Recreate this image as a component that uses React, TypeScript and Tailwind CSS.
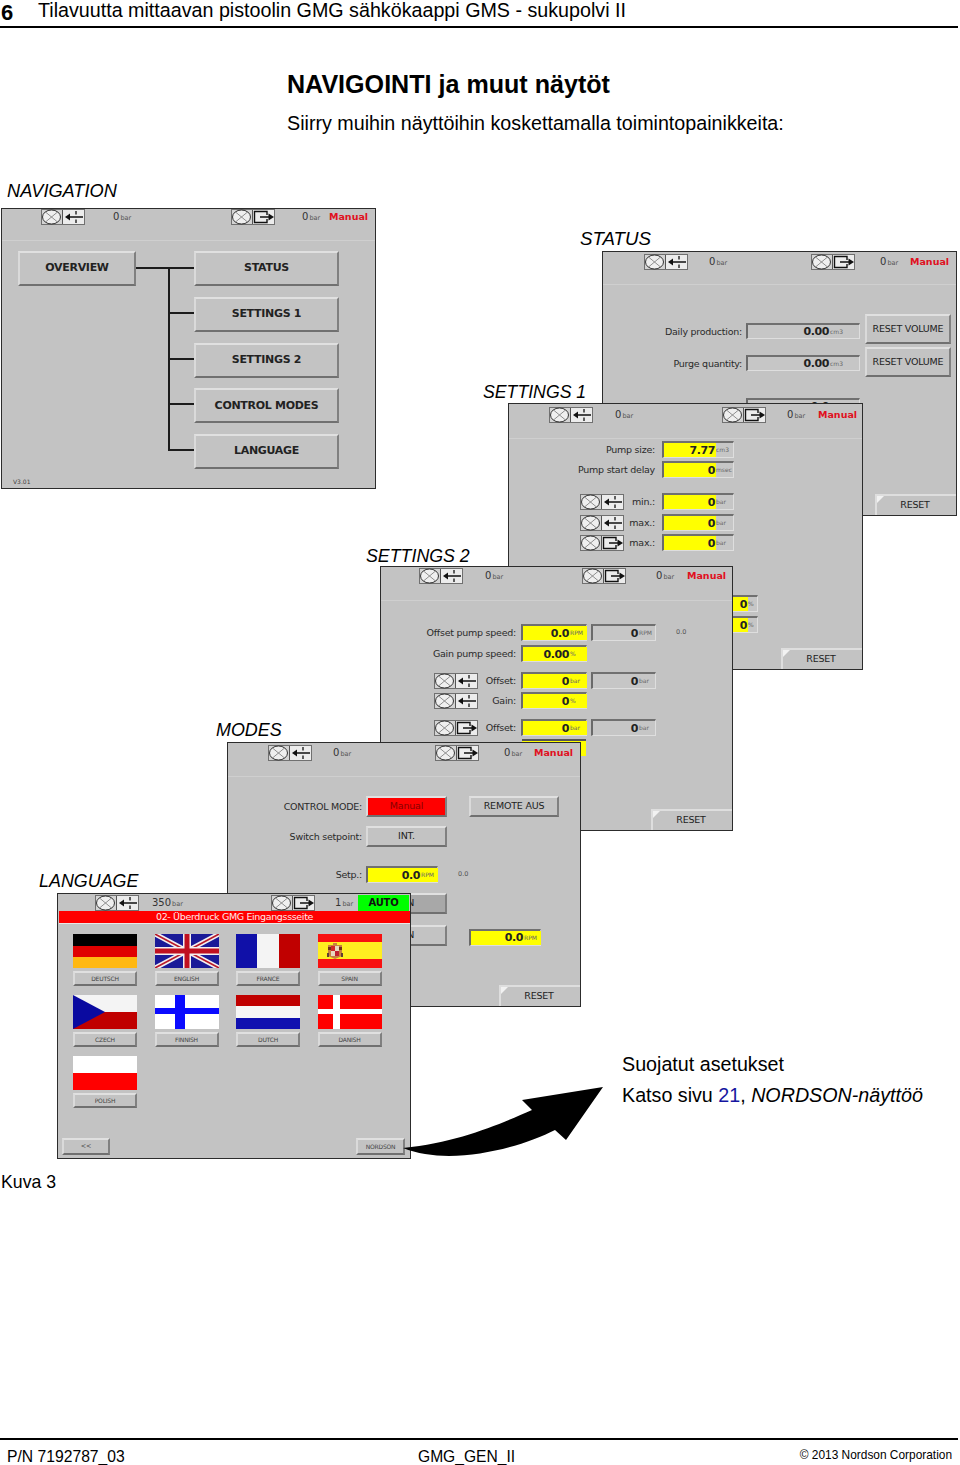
import React from "react";

const HMI = "font-['DejaVu_Sans','Liberation_Sans',sans-serif]";

function Pump({ dir, className = "" }: { dir: "in" | "out"; className?: string }) {
  return (
    <svg width="44" height="16" viewBox="0 0 44 16" className={"shrink-0 " + className}>
      <rect x="0.5" y="0.5" width="43" height="15" fill="#d4d4d4" stroke="#707070" />
      <ellipse cx="10.5" cy="8" rx="9" ry="7" fill="#efefef" stroke="#333" strokeWidth="1" />
      <path d="M4.5 3 L16.5 13 M16.5 3 L4.5 13" stroke="#777" strokeWidth="0.8" />
      <path d="M21.5 1 V15" stroke="#555" strokeWidth="1" />
      <rect x="22" y="1" width="21" height="14" fill="#ececec" />
      {dir === "in" ? (
        <g>
          <path d="M42 8 H27" stroke="#111" strokeWidth="1.5" />
          <path d="M24 8 L29 4.5 V11.5 Z" fill="#111" />
          <path d="M35 2 V5.5 M35 10.5 V14" stroke="#222" strokeWidth="1.4" />
        </g>
      ) : (
        <g>
          <path d="M36 6 V2.5 H23.5 V13.5 H36 V10" stroke="#111" strokeWidth="1.4" fill="none" />
          <path d="M29 8 H38" stroke="#111" strokeWidth="1.5" />
          <path d="M43 8 L37.5 4.5 V11.5 Z" fill="#111" />
        </g>
      )}
    </svg>
  );
}

function Read({ v = "0", u = "bar", className = "" }: { v?: string; u?: string; className?: string }) {
  return (
    <span className={"shrink-0 text-[10px] leading-none text-[#333] whitespace-nowrap " + className}>
      {v}
      <span className="ml-px text-[6.5px] text-[#555]">{u}</span>
    </span>
  );
}

function Manual({ className = "" }: { className?: string }) {
  return <span className={"text-[9.5px] leading-none font-bold text-[#e01020] " + className}>Manual</span>;
}

function Btn({ children, className = "" }: { children?: React.ReactNode; className?: string }) {
  return (
    <div
      className={
        "flex items-center justify-center shrink-0 border-2 border-t-[#e0e0e0] border-l-[#dadada] border-b-[#707070] border-r-[#808080] text-[#222] whitespace-nowrap tracking-[-0.2px] " +
        className
      }
    >
      {children}
    </div>
  );
}

function Reset() {
  return (
    <div className="relative mt-auto self-end shrink-0 w-[81px] h-[21px] flex items-center justify-center pr-[3px] border-t-2 border-l-2 border-t-[#dedede] border-l-[#dedede] text-[9.5px] tracking-[-0.2px] text-[#222]">
      <span className="absolute left-0 top-0 w-0 h-0 border-t-[7px] border-r-[7px] border-t-[#f2f2f2] border-r-transparent" />
      RESET
    </div>
  );
}

function Field({
  v,
  u,
  className = "",
  fill = "",
  uw = "w-[16px]",
}: {
  v: string;
  u: string;
  className?: string;
  fill?: string;
  uw?: string;
}) {
  return (
    <div
      className={
        "relative shrink-0 border-t-2 border-l-2 border-r border-b border-t-[#707070] border-l-[#6a6a6a] border-r-[#dedede] border-b-[#dedede] bg-[#c6c6c6] " +
        className
      }
    >
      {fill && <div className={"absolute left-0 top-0 bottom-0 bg-[#ffff00] " + fill} />}
      <div className="relative h-full flex items-center justify-end">
        <b className="text-[11px] tracking-[-0.4px] leading-none text-[#222]">{v}</b>
        <span className={"ml-px text-[6px] leading-none text-[#666] " + uw}>{u}</span>
      </div>
    </div>
  );
}

function Lbl({ children, className = "" }: { children: React.ReactNode; className?: string }) {
  return (
    <div className={"flex items-center justify-end pt-px text-[9.5px] tracking-[-0.25px] leading-none text-[#2a2a2a] whitespace-nowrap shrink-0 " + className}>
      {children}
    </div>
  );
}

function Win({ children, className = "" }: { children: React.ReactNode; className?: string }) {
  return (
    <section className={"absolute flex flex-col overflow-hidden border border-[#2c2c2c] bg-[#c3c3c3] " + HMI + " " + className}>
      {children}
    </section>
  );
}

function FlagCell({ name, children }: { name: string; children: React.ReactNode }) {
  return (
    <div className="flex flex-col gap-[3px]">
      <svg width="64" height="34" viewBox="0 0 64 34" className="block">
        {children}
      </svg>
      <Btn className="w-[64px] h-[15px] text-[6px] text-[#444]">{name}</Btn>
    </div>
  );
}

export default function App() {
  return (
    <div className="relative w-[960px] h-[1465px] flex flex-col bg-white text-black font-['Liberation_Sans',Arial,sans-serif]">
      <header className="h-[28px] w-[958px] flex items-center border-b-2 border-black">
        <span className="w-[38px] pl-[1px] text-[22px] font-bold leading-none">6</span>
        <span className="text-[19.7px] leading-none -mt-[5px]">Tilavuutta mittaavan pistoolin GMG sähkökaappi GMS - sukupolvi II</span>
      </header>

      <div className="h-[142px] pl-[287px] pt-[41px]">
        <h1 className="text-[25.1px] leading-[30px] font-bold">NAVIGOINTI ja muut näytöt</h1>
        <p className="mt-[12px] text-[19.7px] leading-[24px]">Siirry muihin näyttöihin koskettamalla toimintopainikkeita:</p>
      </div>

      <div className="relative h-[1000px] shrink-0">
        <span className="absolute left-[7px] top-[10px] text-[18.2px] leading-[22px] italic">NAVIGATION</span>
        <span className="absolute left-[580px] top-[58px] text-[18.7px] leading-[22px] italic">STATUS</span>
        <span className="absolute left-[483px] top-[211px] text-[17.7px] leading-[22px] italic">SETTINGS 1</span>
        <span className="absolute left-[366px] top-[375px] text-[17.8px] leading-[22px] italic">SETTINGS 2</span>
        <span className="absolute left-[216px] top-[549px] text-[17.9px] leading-[22px] italic">MODES</span>
        <span className="absolute left-[39px] top-[700px] text-[17.9px] leading-[22px] italic">LANGUAGE</span>

        {/* NAVIGATION */}
        <Win className="left-[1px] top-[38px] w-[375px] h-[281px]">
          <div className="h-[32px] shrink-0 border-b border-[#cfcfcf]">
            <div className="flex items-center h-[15px]">
              <Pump dir="in" className="ml-[39px]" />
              <Read className="ml-[28px] w-[18px]" />
              <Pump dir="out" className="ml-[100px]" />
              <Read className="ml-[27px] w-[18px]" />
              <Manual className="ml-[9px]" />
            </div>
          </div>
          <div className="flex pl-[16px] pt-[10px]">
            <Btn className="w-[118px] h-[35px] text-[11px] font-bold tracking-[-0.3px] border-t-[#555] border-l-[#555] border-b-[#333] border-r-[#333]">OVERVIEW</Btn>
            <svg width="58" height="218" viewBox="0 0 58 218" className="shrink-0">
              <path d="M0 17 H58 M33 17 V199 H58 M33 62 H58 M33 108 H58 M33 153 H58" stroke="#1c1c1c" strokeWidth="2" fill="none" />
            </svg>
            <div className="flex flex-col gap-[10.75px] text-[11px] font-bold">
              <Btn className="w-[145px] h-[35px] tracking-[-0.3px]">STATUS</Btn>
              <Btn className="w-[145px] h-[35px] tracking-[-0.3px]">SETTINGS 1</Btn>
              <Btn className="w-[145px] h-[35px] tracking-[-0.3px]">SETTINGS 2</Btn>
              <Btn className="w-[145px] h-[35px] tracking-[-0.3px]">CONTROL MODES</Btn>
              <Btn className="w-[145px] h-[35px] tracking-[-0.3px]">LANGUAGE</Btn>
            </div>
          </div>
          <span className="mt-auto ml-[11px] mb-[3px] text-[6px] leading-none text-[#444]">V3.01</span>
        </Win>

        {/* STATUS */}
        <Win className="left-[602px] top-[81px] w-[355px] h-[265px]">
          <div className="h-[33px] shrink-0 pt-[2px] border-b border-[#cfcfcf]">
            <div className="flex items-center h-[16px]">
              <Pump dir="in" className="ml-[41px]" />
              <Read className="ml-[21px] w-[18px]" />
              <Pump dir="out" className="ml-[84px]" />
              <Read className="ml-[25px] w-[18px]" />
              <Manual className="ml-[12px]" />
            </div>
          </div>
          <div className="flex-1 flex flex-col pt-[29px]">
            <div className="flex items-start">
              <Lbl className="w-[139px] h-[16px] mt-[9px]">Daily production:</Lbl>
              <Field v="0.00" u="cm3" uw="w-[29px]" className="ml-[4px] mt-[9px] w-[114px] h-[16px]" />
              <Btn className="ml-[5px] w-[86px] h-[30px] text-[9.5px]">RESET VOLUME</Btn>
            </div>
            <div className="flex items-start mt-[3px]">
              <Lbl className="w-[139px] h-[16px] mt-[8px]">Purge quantity:</Lbl>
              <Field v="0.00" u="cm3" uw="w-[29px]" className="ml-[4px] mt-[8px] w-[114px] h-[16px]" />
              <Btn className="ml-[5px] w-[86px] h-[30px] text-[9.5px]">RESET VOLUME</Btn>
            </div>
            <div className="flex items-start mt-[21px]">
              <Lbl className="w-[139px] h-[16px]">Counter (operation time):</Lbl>
              <Field v="0.0" u="h" uw="w-[29px]" className="ml-[4px] w-[114px] h-[16px]" />
            </div>
            <Reset />
          </div>
        </Win>

        {/* SETTINGS 1 */}
        <Win className="left-[508px] top-[233px] w-[355px] h-[267px]">
          <div className="h-[35px] shrink-0 pt-[3px] border-b border-[#cfcfcf]">
            <div className="flex items-center h-[16px]">
              <Pump dir="in" className="ml-[40px]" />
              <Read className="ml-[22px] w-[18px]" />
              <Pump dir="out" className="ml-[89px]" />
              <Read className="ml-[21px] w-[18px]" />
              <Manual className="ml-[13px]" />
            </div>
          </div>
          <div className="flex-1 flex flex-col pt-[2px]">
            <div className="flex items-center h-[17px]">
              <Lbl className="w-[146px] h-[17px]">Pump size:</Lbl>
              <Field v="7.77" u="cm3" fill="w-[52px]" uw="w-[17px]" className="ml-[7px] w-[72px] h-[17px]" />
            </div>
            <div className="flex items-center h-[17px] mt-[3px]">
              <Lbl className="w-[146px] h-[17px]">Pump start delay</Lbl>
              <Field v="0" u="msec" fill="w-[52px]" uw="w-[17px]" className="ml-[7px] w-[72px] h-[17px]" />
            </div>
            <div className="flex items-center h-[17px] mt-[15px]">
              <Pump dir="in" className="ml-[71px]" />
              <Lbl className="w-[31px] h-[17px]">min.:</Lbl>
              <Field v="0" u="bar" fill="w-[52px]" uw="w-[17px]" className="ml-[7px] w-[72px] h-[17px]" />
            </div>
            <div className="flex items-center h-[17px] mt-[4px]">
              <Pump dir="in" className="ml-[71px]" />
              <Lbl className="w-[31px] h-[17px]">max.:</Lbl>
              <Field v="0" u="bar" fill="w-[52px]" uw="w-[17px]" className="ml-[7px] w-[72px] h-[17px]" />
            </div>
            <div className="flex items-center h-[17px] mt-[3px]">
              <Pump dir="out" className="ml-[71px]" />
              <Lbl className="w-[31px] h-[17px]">max.:</Lbl>
              <Field v="0" u="bar" fill="w-[52px]" uw="w-[17px]" className="ml-[7px] w-[72px] h-[17px]" />
            </div>
            <div className="ml-[154px] mt-[15px] w-[70px] h-[17px] shrink-0 border-t-2 border-t-[#555] bg-[#ffff00]" />
            <Field v="0" u="%" fill="w-[84px]" uw="w-[9px]" className="ml-[153px] mt-[12px] w-[96px] h-[17px]" />
            <Field v="0" u="%" fill="w-[84px]" uw="w-[9px]" className="ml-[153px] mt-[4px] w-[96px] h-[17px]" />
            <Reset />
          </div>
        </Win>

        {/* SETTINGS 2 */}
        <Win className="left-[380px] top-[396px] w-[353px] h-[265px]">
          <div className="h-[34px] shrink-0 pt-[1px] border-b border-[#cfcfcf]">
            <div className="flex items-center h-[16px]">
              <Pump dir="in" className="ml-[38px]" />
              <Read className="ml-[22px] w-[18px]" />
              <Pump dir="out" className="ml-[79px]" />
              <Read className="ml-[30px] w-[18px]" />
              <Manual className="ml-[13px]" />
            </div>
          </div>
          <div className="flex-1 flex flex-col pt-[23px]">
            <div className="flex items-center h-[17px]">
              <Lbl className="w-[135px] h-[17px]">Offset pump speed:</Lbl>
              <Field v="0.0" u="RPM" fill="w-[64px]" className="ml-[5px] w-[66px] h-[17px]" />
              <Field v="0" u="RPM" className="ml-[4px] w-[65px] h-[17px]" />
              <span className="ml-[20px] text-[6.5px] text-[#555]">0.0</span>
            </div>
            <div className="flex items-center h-[17px] mt-[4px]">
              <Lbl className="w-[135px] h-[17px]">Gain pump speed:</Lbl>
              <Field v="0.00" u="%" fill="w-[64px]" className="ml-[5px] w-[66px] h-[17px]" />
            </div>
            <div className="flex items-center h-[17px] mt-[10px]">
              <Pump dir="in" className="ml-[53px]" />
              <Lbl className="w-[38px] h-[17px]">Offset:</Lbl>
              <Field v="0" u="bar" fill="w-[64px]" className="ml-[5px] w-[66px] h-[17px]" />
              <Field v="0" u="bar" className="ml-[4px] w-[65px] h-[17px]" />
            </div>
            <div className="flex items-center h-[17px] mt-[3px]">
              <Pump dir="in" className="ml-[53px]" />
              <Lbl className="w-[38px] h-[17px]">Gain:</Lbl>
              <Field v="0" u="%" fill="w-[64px]" className="ml-[5px] w-[66px] h-[17px]" />
            </div>
            <div className="flex items-center h-[17px] mt-[10px]">
              <Pump dir="out" className="ml-[53px]" />
              <Lbl className="w-[38px] h-[17px]">Offset:</Lbl>
              <Field v="0" u="bar" fill="w-[64px]" className="ml-[5px] w-[66px] h-[17px]" />
              <Field v="0" u="bar" className="ml-[4px] w-[65px] h-[17px]" />
            </div>
            <div className="ml-[141px] mt-[3px] w-[64px] h-[17px] shrink-0 border-t-2 border-t-[#555] bg-[#ffff00]" />
            <Reset />
          </div>
        </Win>

        {/* MODES */}
        <Win className="left-[227px] top-[572px] w-[354px] h-[265px]">
          <div className="h-[34px] shrink-0 pt-[2px] border-b border-[#cfcfcf]">
            <div className="flex items-center h-[16px]">
              <Pump dir="in" className="ml-[40px]" />
              <Read className="ml-[21px] w-[18px]" />
              <Pump dir="out" className="ml-[84px]" />
              <Read className="ml-[25px] w-[18px]" />
              <Manual className="ml-[12px]" />
            </div>
          </div>
          <div className="flex-1 flex flex-col pt-[19px]">
            <div className="flex items-center h-[21px]">
              <Lbl className="w-[134px] h-[21px]">CONTROL MODE:</Lbl>
              <Btn className="ml-[4px] w-[81px] h-[21px] bg-[#ff0000] text-[9.5px] text-[#800]">Manual</Btn>
              <Btn className="ml-[22px] w-[90px] h-[21px] text-[9.5px]">REMOTE AUS</Btn>
            </div>
            <div className="flex items-center h-[21px] mt-[9px]">
              <Lbl className="w-[134px] h-[21px]">Switch setpoint:</Lbl>
              <Btn className="ml-[4px] w-[81px] h-[21px] text-[9.5px]">INT.</Btn>
            </div>
            <div className="flex items-center h-[17px] mt-[19px]">
              <Lbl className="w-[134px] h-[17px]">Setp.:</Lbl>
              <Field v="0.0" u="RPM" fill="w-[70px]" className="ml-[4px] w-[72px] h-[17px]" />
              <span className="ml-[20px] text-[6.5px] text-[#555]">0.0</span>
            </div>
            <Btn className="ml-[138px] mt-[10px] w-[81px] h-[21px] bg-[#a8a8a8] text-[9.5px]">EIN</Btn>
            <div className="flex items-center h-[21px] mt-[11px]">
              <Btn className="ml-[138px] w-[81px] h-[21px] text-[9.5px]">EIN</Btn>
              <Field v="0.0" u="RPM" fill="w-[70px]" className="ml-[22px] mt-[3px] w-[72px] h-[17px]" />
            </div>
            <Reset />
          </div>
        </Win>

        {/* LANGUAGE */}
        <Win className="left-[57px] top-[723px] w-[354px] h-[266px]">
          <div className="h-[17px] shrink-0 flex items-center">
            <Pump dir="in" className="ml-[37px]" />
            <Read v="350" className="ml-[13px] w-[26px]" />
            <Pump dir="out" className="ml-[93px]" />
            <Read v="1" className="ml-[20px] w-[18px]" />
            <div className="ml-[5px] w-[51px] h-[16px] bg-[#00ff00] flex items-center justify-center text-[10px] tracking-[-0.2px] font-bold text-[#111]">AUTO</div>
          </div>
          <div className="ml-[1px] h-[13px] shrink-0 bg-[#ff0000] flex items-center justify-center text-[9.5px] tracking-[-0.35px] text-[#ffe8e8] border-b border-[#e8e8e8]">
            02- Überdruck GMG Eingangssseite
          </div>
          <div className="grid grid-cols-[repeat(4,64px)] gap-x-[17.5px] gap-y-[9px] pl-[15px] pt-[10px]">
            <FlagCell name="DEUTSCH">
              <rect width="64" height="12" fill="#000" />
              <rect y="12" width="64" height="11" fill="#e00000" />
              <rect y="23" width="64" height="11" fill="#ffb812" />
            </FlagCell>
            <FlagCell name="ENGLISH">
              <rect width="64" height="34" fill="#1a1a98" />
              <path d="M0 0 L64 34 M64 0 L0 34" stroke="#f4f0f0" strokeWidth="5" />
              <path d="M0 0 L64 34 M64 0 L0 34" stroke="#b81a2a" strokeWidth="1.6" />
              <path d="M32 0 V34 M0 17 H64" stroke="#f4f0f0" strokeWidth="8" />
              <path d="M32 0 V34 M0 17 H64" stroke="#c01020" strokeWidth="5" />
            </FlagCell>
            <FlagCell name="FRANCE">
              <rect width="21" height="34" fill="#1010a8" />
              <rect x="21" width="22" height="34" fill="#f4f4f4" />
              <rect x="43" width="21" height="34" fill="#c00000" />
            </FlagCell>
            <FlagCell name="SPAIN">
              <rect width="64" height="34" fill="#f81010" />
              <rect y="8" width="64" height="17" fill="#ffee20" />
              <path d="M10 11 H15 V9 H19 V11 H24 V22 L17 25 L10 22 Z" fill="#c88040" />
              <rect x="10" y="13" width="3" height="3" fill="#703018" />
              <rect x="21" y="13" width="3" height="3" fill="#703018" />
              <rect x="13" y="12" width="4" height="5" fill="#d02828" />
              <rect x="17" y="12" width="4" height="5" fill="#e8d8c0" />
              <rect x="13" y="17" width="4" height="5" fill="#e8d8c0" />
              <rect x="17" y="17" width="4" height="5" fill="#c02030" />
              <rect x="9" y="19" width="2" height="4" fill="#604030" />
              <rect x="23" y="19" width="2" height="4" fill="#604030" />
            </FlagCell>
            <FlagCell name="CZECH">
              <rect width="64" height="17" fill="#f4f4f4" />
              <rect y="17" width="64" height="17" fill="#c00000" />
              <path d="M0 0 L32 17 L0 34 Z" fill="#0a0aa0" />
            </FlagCell>
            <FlagCell name="FINNISH">
              <rect width="64" height="34" fill="#fff" />
              <rect x="20" width="10" height="34" fill="#0a0aff" />
              <rect y="13" width="64" height="6" fill="#0a0aff" />
            </FlagCell>
            <FlagCell name="DUTCH">
              <rect width="64" height="11" fill="#c00000" />
              <rect y="11" width="64" height="12" fill="#f6f6f6" />
              <rect y="23" width="64" height="11" fill="#1010b0" />
            </FlagCell>
            <FlagCell name="DANISH">
              <rect width="64" height="34" fill="#ff0000" />
              <rect x="15" width="7" height="34" fill="#fff" />
              <rect y="14" width="64" height="5" fill="#fff" />
            </FlagCell>
            <FlagCell name="POLISH">
              <rect width="64" height="17" fill="#fff" />
              <rect y="17" width="64" height="17" fill="#ff0000" />
            </FlagCell>
          </div>
          <div className="mt-auto mb-[3px] flex justify-between pl-[4px] pr-[5px]">
            <Btn className="w-[48px] h-[17px] text-[6.5px] text-[#444]">&lt;&lt;</Btn>
            <Btn className="w-[49px] h-[17px] text-[6px] text-[#444]">NORDSON</Btn>
          </div>
        </Win>

        <svg width="210" height="80" viewBox="0 0 210 80" className="absolute left-[400px] top-[912px]">
          <path
            d="M3 66 C60 60 100 42 132 28 L122 18 L203 5 L166 58 L155 48 C120 66 50 85 3 66 Z"
            fill="#000"
          />
        </svg>

        <div className="absolute left-[622px] top-[882px] text-[19.7px] leading-[24px]">
          <p>Suojatut asetukset</p>
          <p className="mt-[7px]">
            Katso sivu <span className="text-[#1515a0]">21</span>, <i>NORDSON-näyttöö</i>
          </p>
        </div>
      </div>

      <p className="pl-[1px] pt-[1px] text-[17.7px] leading-[22px]">Kuva 3</p>

      <footer className="mt-auto h-[27px] w-[958px] flex items-center border-t-2 border-black pt-[9px]">
        <span className="w-[418px] pl-[7px] text-[15.7px] leading-none">P/N 7192787_03</span>
        <span className="text-[15.6px] leading-none">GMG_GEN_II</span>
        <span className="ml-auto mr-[6px] -mt-[3px] text-[11.9px] leading-none">© 2013 Nordson Corporation</span>
      </footer>
    </div>
  );
}
